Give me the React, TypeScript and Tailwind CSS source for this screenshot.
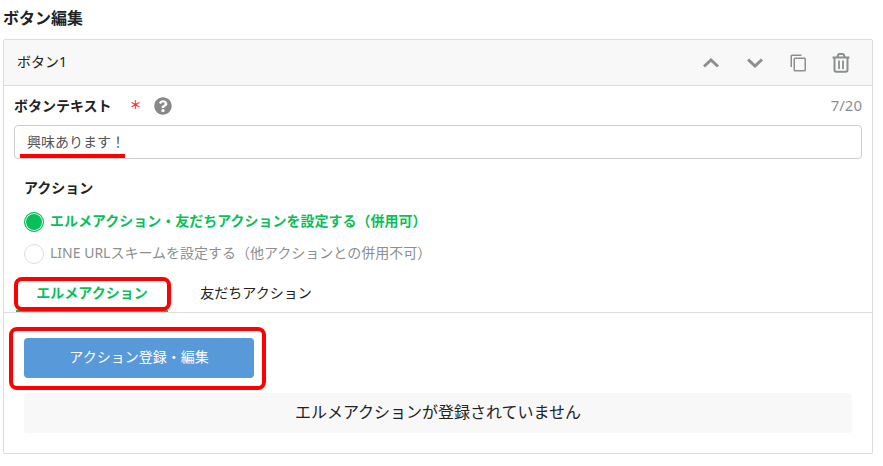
import { useState } from "react";
import { FaQuestionCircle } from "react-icons/fa";

const MAX_LENGTH = 20;

const actionTypes = [
  { id: "elme", label: "エルメアクション・友だちアクションを設定する（併用可）" },
  { id: "line", label: "LINE URLスキームを設定する（他アクションとの併用不可）" },
];

function ChevronIcon({ down = false }: { down?: boolean }) {
  return (
    <svg width="18" height="18" viewBox="0 0 18 18" fill="none" stroke="currentColor" strokeWidth="3">
      <path d={down ? "M2 5.5L9 12L16 5.5" : "M2 12.5L9 6L16 12.5"} />
    </svg>
  );
}

function CopyIcon() {
  return (
    <svg width="16" height="18" viewBox="0 0 16 18" fill="none" stroke="currentColor" strokeWidth="1.5">
      <path d="M1.25 13V2Q1.25 1.25 2 1.25H11.5" />
      <rect x="4.25" y="4.25" width="11" height="12.5" rx="0.8" />
    </svg>
  );
}

function TrashIcon() {
  return (
    <svg width="18" height="20" viewBox="0 0 18 20" fill="none" stroke="currentColor">
      <path d="M0.5 4.5H17.5M5 4.5L6.4 1.5Q6.7 1 7.3 1H10.7Q11.3 1 11.6 1.5L13 4.5" strokeWidth="2" />
      <path d="M2.5 4.5V17Q2.5 18.8 4.2 18.8H13.8Q15.5 18.8 15.5 17V4.5" strokeWidth="2" />
      <path d="M7 7.5V16M11 7.5V16" strokeWidth="1.8" />
    </svg>
  );
}

export default function App() {
  const [text, setText] = useState<string>("興味あります！");
  const [actionType, setActionType] = useState<string>("elme");
  const [tab, setTab] = useState<string>("elme");

  return (
    <div className="pl-[3px] pr-[10px] pt-[6px] pb-3 bg-white text-[#222] text-sm font-['Noto_Sans','Noto_Sans_CJK_JP',sans-serif]">
      <h2 className="text-base leading-6 font-bold mb-[9px]">ボタン編集</h2>

      <div className="border border-[#ddd] rounded-xs">
        <div className="flex items-center justify-between h-[46px] pl-[13px] pr-[22px] bg-[#f8f8f8] border-b border-[#ddd]">
          <span className="pb-0.5">ボタン1</span>
          <div className="flex items-center text-[#8b8f8f] gap-[26px]">
            <button aria-label="上へ移動">
              <ChevronIcon />
            </button>
            <button aria-label="下へ移動">
              <ChevronIcon down />
            </button>
            <button aria-label="コピー">
              <CopyIcon />
            </button>
            <button aria-label="削除">
              <TrashIcon />
            </button>
          </div>
        </div>

        <div className="px-[10px] pt-[10px]">
          <div className="flex items-center h-5 mb-[9px]">
            <label htmlFor="button-text" className="font-bold">
              ボタンテキスト
            </label>
            <span className="ml-[18px] text-xs font-bold text-[#f33]">＊</span>
            <FaQuestionCircle size={18} className="ml-3 text-[#888]" />
            <span className="ml-auto text-[15px] text-[#8b8f8f]">
              {text.length}/{MAX_LENGTH}
            </span>
          </div>
          <div className="relative">
            <input
              id="button-text"
              type="text"
              maxLength={MAX_LENGTH}
              value={text}
              onChange={(e) => setText(e.target.value)}
              className="block w-full h-[34px] px-3 pb-0.5 border border-[#ccc] rounded text-[#555]"
            />
            <div className="absolute left-[6px] bottom-[1px] w-[105px] h-1 bg-[#f00]" />
          </div>
        </div>

        <fieldset className="px-5 mt-[19px]">
          <legend className="font-bold leading-5 mb-2">アクション</legend>
          {actionTypes.map((type) => (
            <label
              key={type.id}
              className={`flex items-center h-8 gap-[6px] ${
                actionType === type.id ? "font-bold text-[#08bf5a]" : "text-[#8b8f8f]"
              }`}
            >
              <input
                type="radio"
                name="action-type"
                checked={actionType === type.id}
                onChange={() => setActionType(type.id)}
                className="appearance-none size-5 rounded-full border border-[#ddd] bg-white checked:border-[#08bf5a] checked:bg-[#08bf5a] checked:shadow-[inset_0_0_0_1px_#fff]"
              />
              <span className="pb-0.5">{type.label}</span>
            </label>
          ))}
        </fieldset>

        <div className="flex h-[43px] pl-3 border-b border-[#ddd]">
          <div className="relative flex">
            <button
              onClick={() => setTab("elme")}
              className={`w-[152px] pt-1.5 border-b-2 ${
                tab === "elme" ? "font-bold text-[#08bf5a] border-[#08bf5a]" : "border-transparent"
              }`}
            >
              エルメアクション
            </button>
            <div className="absolute -left-[2px] -right-[3px] top-[7px] bottom-[1px] border-4 border-[#f00] rounded-lg pointer-events-none" />
          </div>
          <button
            onClick={() => setTab("friend")}
            className={`w-[176px] pt-1.5 border-b-2 ${
              tab === "friend" ? "font-bold text-[#08bf5a] border-[#08bf5a]" : "border-transparent"
            }`}
          >
            友だちアクション
          </button>
        </div>

        <div className="px-5 pt-[25px] pb-5">
          <div className="relative w-[230px] mb-[15px]">
            <button className="block w-full h-10 pb-0.5 rounded bg-[#5899da] text-white">アクション登録・編集</button>
            <div className="absolute -left-[15px] -right-[12px] -top-[11px] -bottom-[12px] border-4 border-[#f00] rounded-lg pointer-events-none" />
          </div>
          <p className="flex items-center justify-center h-10 pb-0.5 rounded bg-[#f8f8f8] text-base">
            エルメアクションが登録されていません
          </p>
        </div>
      </div>
    </div>
  );
}
